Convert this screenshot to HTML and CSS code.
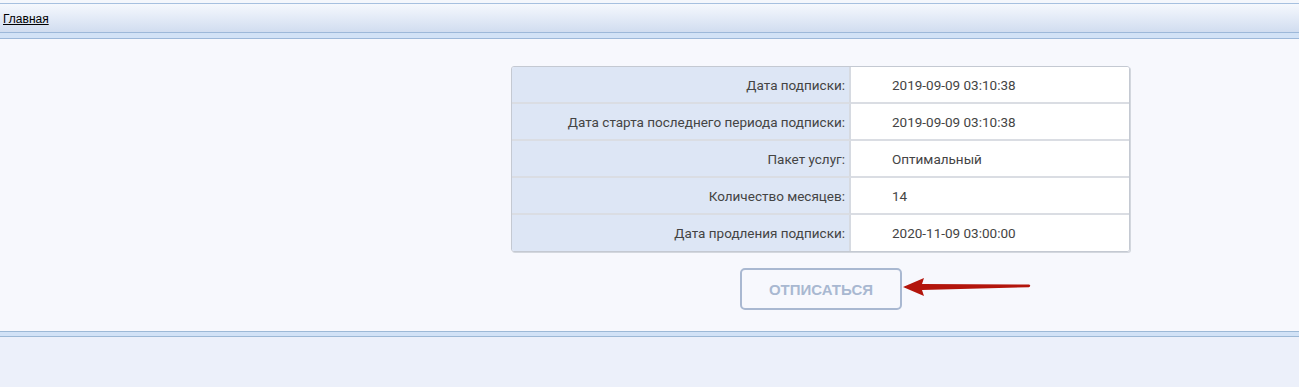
FILE: index.html
```html
<!DOCTYPE html>
<html lang="ru">
<head>
  <meta charset="UTF-8">
  <title>Подписка</title>
  <meta name="viewport" content="width=device-width, initial-scale=1.0">
  <link rel="stylesheet" href="styles.css">
</head>
<body>

<!-- Верхнее меню -->
<div class="top-gap"></div>
<div class="nav">
  <a href="#" class="nav-link">Главная</a>
</div>
<div class="nav-strip"></div>

<!-- Информация о подписке -->
<div class="content">
  <div class="panel">
    <table class="info-table">
      <tr>
        <td class="label">Дата подписки:</td>
        <td class="value">2019-09-09 03:10:38</td>
      </tr>
      <tr>
        <td class="label">Дата старта последнего периода подписки:</td>
        <td class="value">2019-09-09 03:10:38</td>
      </tr>
      <tr>
        <td class="label">Пакет услуг:</td>
        <td class="value">Оптимальный</td>
      </tr>
      <tr>
        <td class="label">Количество месяцев:</td>
        <td class="value">14</td>
      </tr>
      <tr>
        <td class="label">Дата продления подписки:</td>
        <td class="value">2020-11-09 03:00:00</td>
      </tr>
    </table>

    <div class="button-wrap">
      <button type="button" class="btn-unsub">ОТПИСАТЬСЯ</button>
      <svg class="arrow" width="130" height="22" viewBox="0 0 130 22">
        <path d="M1 11 L22 2 L20 8 L127 8.6 Q129.5 9.8 127 11.2 L20 14 L22 20 Z" fill="#b3150c"/>
      </svg>
    </div>
  </div>
</div>

<!-- Нижняя полоса -->
<div class="footer-strip"></div>
<div class="footer"></div>

</body>
</html>
```

FILE: styles.css
```css
body {
  margin: 0;
  padding: 0;
  font-family: "Liberation Sans", Arial, sans-serif;
  background-color: #ecf0fa;
}

.top-gap {
  height: 3px;
  background-color: #f4f7fc;
}

.nav {
  height: 28px;
  border-top: 1px solid #a6c0df;
  border-bottom: 1px solid #9db8d9;
  background: linear-gradient(#f5f8fd, #d1ddf0);
  display: flex;
  align-items: center;
  padding-left: 3px;
}

.nav-link {
  font-size: 12px;
  color: #000;
  text-decoration: underline;
  margin-top: 2px;
}

.nav-strip {
  height: 5px;
  background-color: #d2e2f6;
  border-bottom: 1px solid #9db8d9;
}

.content {
  height: 265px;
  padding-top: 27px;
  background-color: #f7f8fd;
}

.panel {
  width: 619px;
  margin-left: 511px;
  display: flex;
  flex-direction: column;
  align-items: center;
}

.info-table {
  width: 619px;
  border-collapse: separate;
  border-spacing: 0;
  border: 1px solid #c4c9d2;
  border-radius: 3px;
  box-shadow: 1px 1px 0 #d3d7de;
  font-family: Roboto, "Liberation Sans", Arial, sans-serif;
  font-size: 13.5px;
  color: #444;
  overflow: hidden;
}

.info-table td {
  height: 35px;
  padding: 0;
  border-bottom: 2px solid #dadde3;
}

.info-table tr:last-child td {
  border-bottom: none;
  height: 36px;
}

.label {
  width: 333px;
  padding-right: 4px !important;
  text-align: right;
  background-color: #dde6f5;
  border-right: 2px solid #d6dae1;
}

.value {
  padding-left: 41px !important;
  background-color: #fff;
}

.button-wrap {
  position: relative;
  margin-top: 16px;
  margin-left: 1px;
}

.btn-unsub {
  width: 162px;
  height: 42px;
  border: 2px solid #a9b8d1;
  border-radius: 5px;
  background-color: #f7f8fd;
  color: #a9b8d1;
  font-family: "Liberation Sans", Arial, sans-serif;
  font-size: 15px;
  font-weight: bold;
  padding: 0;
  cursor: pointer;
}

.arrow {
  position: absolute;
  left: 162px;
  top: 8px;
}

.footer-strip {
  height: 4px;
  border-top: 1px solid #9db9d6;
  border-bottom: 1px solid #9db9d6;
  background-color: #d2e2f6;
}

.footer {
  height: 49px;
  background-color: #ecf0fa;
}
```
